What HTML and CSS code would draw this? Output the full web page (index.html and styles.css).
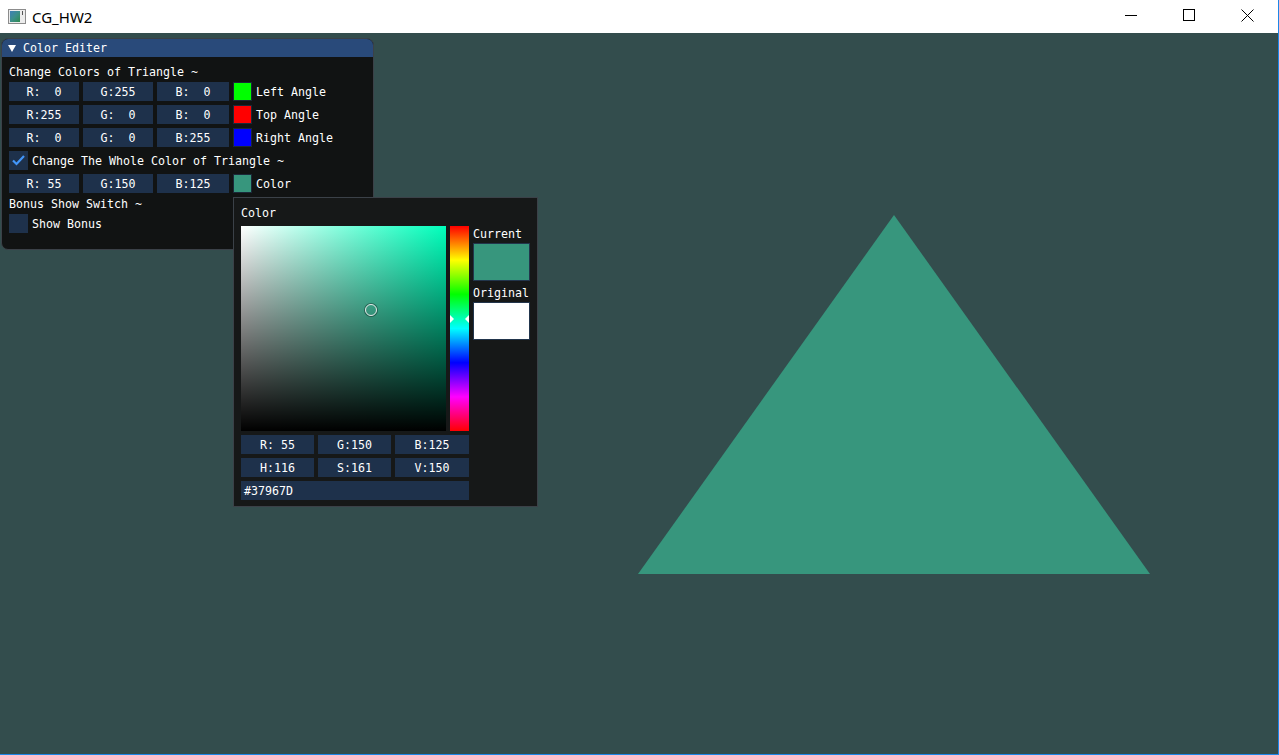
FILE: index.html
```html
<!DOCTYPE html>
<html>
<head>
<meta charset="utf-8">
<title>CG_HW2</title>
<link rel="stylesheet" href="styles.css">
</head>
<body>
<div class="screen">
  <header class="titlebar">
    <svg class="app-icon" width="18" height="15" viewBox="0 0 18 15">
      <defs>
        <linearGradient id="ig" x1="0" y1="0" x2="1" y2="1">
          <stop offset="0" stop-color="#3f7fb8"/>
          <stop offset="0.5" stop-color="#3c8f8a"/>
          <stop offset="1" stop-color="#2e8a4e"/>
        </linearGradient>
      </defs>
      <rect x="0.5" y="0.5" width="17" height="14" fill="#ececec" stroke="#8c8c8c"/>
      <rect x="2" y="2" width="10" height="11" fill="url(#ig)"/>
      <rect x="14" y="2" width="1" height="4" fill="#555"/>
    </svg>
    <span class="app-title">CG_HW2</span>
    <div class="win-controls">
      <span class="ctl">
        <svg width="12" height="12" viewBox="0 0 12 12"><line x1="0" y1="6.5" x2="12" y2="6.5" stroke="#000" stroke-width="1"/></svg>
      </span>
      <span class="ctl">
        <svg width="12" height="12" viewBox="0 0 12 12"><rect x="0.5" y="0.5" width="11" height="11" fill="none" stroke="#000" stroke-width="1"/></svg>
      </span>
      <span class="ctl">
        <svg width="13" height="13" viewBox="0 0 13 13"><path d="M0.5 0.5 L12.5 12.5 M12.5 0.5 L0.5 12.5" stroke="#000" stroke-width="1" fill="none"/></svg>
      </span>
    </div>
  </header>

  <main class="viewport">
    <svg class="scene" width="1278" height="721" viewBox="0 0 1278 721">
      <polygon points="894,182 638,541 1150,541" fill="#37967d"/>
    </svg>

    <section class="imwin editor">
      <div class="imwin-title">
        <span class="collapse-arrow"></span>
        <span class="title-text">Color Editer</span>
      </div>
      <div class="imwin-body">
        <div class="im-text">Change Colors of Triangle ~</div>
        <div class="im-row">
          <div class="drag w70">R:  0</div>
          <div class="drag w70">G:255</div>
          <div class="drag w72">B:  0</div>
          <div class="swatch sw-green"></div>
          <span class="im-label">Left Angle</span>
        </div>
        <div class="im-row">
          <div class="drag w70">R:255</div>
          <div class="drag w70">G:  0</div>
          <div class="drag w72">B:  0</div>
          <div class="swatch sw-red"></div>
          <span class="im-label">Top Angle</span>
        </div>
        <div class="im-row">
          <div class="drag w70">R:  0</div>
          <div class="drag w70">G:  0</div>
          <div class="drag w72">B:255</div>
          <div class="swatch sw-blue"></div>
          <span class="im-label">Right Angle</span>
        </div>
        <div class="im-row">
          <div class="checkbox">
            <svg width="19" height="19" viewBox="0 0 19 19"><polyline points="4,9.5 7.5,13 15,5" fill="none" stroke="#4296fa" stroke-width="2.2" stroke-linejoin="miter"/></svg>
          </div>
          <span class="im-label">Change The Whole Color of Triangle ~</span>
        </div>
        <div class="im-row">
          <div class="drag w70">R: 55</div>
          <div class="drag w70">G:150</div>
          <div class="drag w72">B:125</div>
          <div class="swatch sw-teal"></div>
          <span class="im-label">Color</span>
        </div>
        <div class="im-text">Bonus Show Switch ~</div>
        <div class="im-row">
          <div class="checkbox"></div>
          <span class="im-label">Show Bonus</span>
        </div>
      </div>
    </section>

    <section class="imwin popup">
      <div class="im-text pop-label">Color</div>
      <div class="picker-main">
        <div class="sv-square">
          <span class="sv-cursor"></span>
        </div>
        <div class="hue-bar">
          <span class="hue-arrow left"></span>
          <span class="hue-arrow right"></span>
        </div>
        <div class="preview-col">
          <div class="im-text">Current</div>
          <div class="preview sw-teal"></div>
          <div class="im-text">Original</div>
          <div class="preview sw-white"></div>
        </div>
      </div>
      <div class="inputs">
        <div class="im-row">
          <div class="drag w73">R: 55</div>
          <div class="drag w73">G:150</div>
          <div class="drag w74">B:125</div>
        </div>
        <div class="im-row">
          <div class="drag w73">H:116</div>
          <div class="drag w73">S:161</div>
          <div class="drag w74">V:150</div>
        </div>
        <div class="im-row">
          <div class="drag hex">#37967D</div>
        </div>
      </div>
    </section>
  </main>
</div>
</body>
</html>
```

FILE: styles.css
```css
* {
  box-sizing: border-box;
  margin: 0;
  padding: 0;
}

html, body {
  width: 1279px;
  height: 755px;
  overflow: hidden;
  background: #ffffff;
}

body {
  font-family: "DejaVu Sans Mono", "Liberation Mono", monospace;
  font-size: 11.63px;
  color: #ffffff;
}

.screen {
  width: 1279px;
  height: 755px;
  display: flex;
  flex-direction: column;
  border-right: 1px solid #1e86e8;
  border-bottom: 1px solid #1e86e8;
}

/* ---------- OS title bar ---------- */
.titlebar {
  height: 33px;
  flex: none;
  display: flex;
  align-items: center;
  padding-left: 8px;
  background: #ffffff;
  font-family: "Noto Sans", "Open Sans", sans-serif;
  font-size: 15px;
  color: #000000;
}

.app-icon {
  margin-right: 6px;
  margin-top: -1px;
}

.app-title {
  line-height: 20px;
}

.win-controls {
  margin-left: auto;
  align-self: flex-start;
  display: flex;
  padding-right: 2px;
}

.ctl {
  width: 58px;
  height: 30px;
  display: flex;
  align-items: center;
  justify-content: center;
}

/* ---------- GL viewport ---------- */
.viewport {
  flex: 1;
  position: relative;
  background: #334d4d;
  overflow: hidden;
}

.scene {
  position: absolute;
  left: 0;
  top: 0;
}

/* ---------- ImGui windows ---------- */
.imwin {
  position: absolute;
  border: 1px solid #3b4148;
}

.editor {
  left: 1px;
  top: 5px;
  width: 373px;
  height: 212px;
  background: #111313;
  border-radius: 7px;
  overflow: hidden;
}

.imwin-title {
  height: 18px;
  background: #294a7a;
  display: flex;
  align-items: center;
  padding-left: 6px;
  gap: 7px;
}

.collapse-arrow {
  width: 0;
  height: 0;
  border-left: 4px solid transparent;
  border-right: 4px solid transparent;
  border-top: 7px solid #ffffff;
}

.title-text {
  line-height: 13px;
  padding-top: 1px;
}

.imwin-body {
  padding: 8px 7px 0 7px;
  display: flex;
  flex-direction: column;
  gap: 4px;
}

.im-text {
  height: 13px;
  line-height: 13px;
  padding-top: 1px;
  white-space: pre;
}

.im-row {
  height: 19px;
  display: flex;
  align-items: center;
  gap: 4px;
}

.im-label {
  line-height: 13px;
  padding-top: 2px;
  white-space: pre;
}

.drag {
  height: 19px;
  line-height: 19px;
  padding-top: 1px;
  background: #1e314b;
  text-align: center;
  white-space: pre;
  flex: none;
}

.w70 { width: 70px; }
.w72 { width: 72px; }
.w73 { width: 73px; }
.w74 { width: 74px; }

.hex {
  width: 228px;
  text-align: left;
  padding-left: 3px;
}

.swatch {
  width: 19px;
  height: 19px;
  flex: none;
  border: 1px solid #1b2838;
}

.sw-green { background: #00ff00; }
.sw-red { background: #ff0000; }
.sw-blue { background: #0000ff; }
.sw-teal { background: #37967d; }
.sw-white { background: #ffffff; }

.checkbox {
  width: 19px;
  height: 19px;
  flex: none;
  background: #1e314b;
}

.checkbox svg {
  display: block;
}

/* ---------- Color picker popup ---------- */
.popup {
  left: 233px;
  top: 164px;
  width: 305px;
  height: 310px;
  background: #161818;
  padding: 7px 0 0 7px;
}

.pop-label {
  margin-bottom: 8px;
  padding-top: 2px;
}

.picker-main {
  display: flex;
  align-items: flex-start;
}

.sv-square {
  position: relative;
  width: 205px;
  height: 205px;
  background:
    linear-gradient(to bottom, rgba(0, 0, 0, 0), #000000),
    linear-gradient(to right, #ffffff, #00ffbb);
}

.sv-cursor {
  position: absolute;
  left: 124px;
  top: 78px;
  width: 12px;
  height: 12px;
  border-radius: 50%;
  border: 1.5px solid #e8e8e8;
  box-shadow: 0 0 0 1px rgba(0, 0, 0, 0.35);
}

.hue-bar {
  position: relative;
  margin-left: 4px;
  width: 19px;
  height: 205px;
  background: linear-gradient(to bottom, #ff0000, #ffff00 16.67%, #00ff00 33.33%, #00ffff 50%, #0000ff 66.67%, #ff00ff 83.33%, #ff0000);
}

.hue-arrow {
  position: absolute;
  top: 89px;
  width: 0;
  height: 0;
  border-top: 4px solid transparent;
  border-bottom: 4px solid transparent;
}

.hue-arrow.left {
  left: 0;
  border-left: 4px solid #ffffff;
}

.hue-arrow.right {
  right: 0;
  border-right: 4px solid #ffffff;
}

.preview-col {
  margin-left: 4px;
  width: 57px;
  display: flex;
  flex-direction: column;
  gap: 4px;
}

.preview-col .im-text {
  padding-top: 2px;
}

.preview {
  width: 57px;
  height: 38px;
  border: 1px solid #22354c;
}

.inputs {
  margin-top: 4px;
  display: flex;
  flex-direction: column;
  gap: 4px;
}
```
